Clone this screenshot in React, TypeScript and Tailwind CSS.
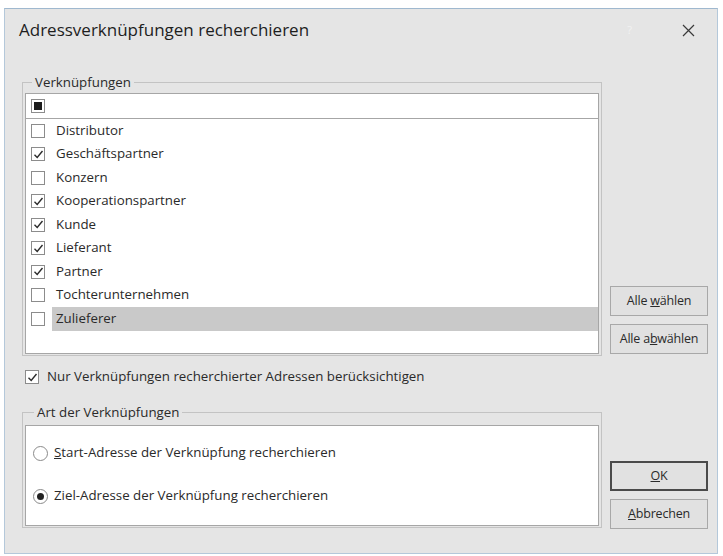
import React, { useState } from "react";

const items = [
  { id: 1, label: "Distributor", checked: false },
  { id: 2, label: "Geschäftspartner", checked: true },
  { id: 3, label: "Konzern", checked: false },
  { id: 4, label: "Kooperationspartner", checked: true },
  { id: 5, label: "Kunde", checked: true },
  { id: 6, label: "Lieferant", checked: true },
  { id: 7, label: "Partner", checked: true },
  { id: 8, label: "Tochterunternehmen", checked: false },
  { id: 9, label: "Zulieferer", checked: false },
];

const font = { fontFamily: '"Open Sans", "Noto Sans", Arial, sans-serif' };

const CheckBox = ({ checked }: { checked: boolean }) => (
  <span className="flex h-[14px] w-[14px] shrink-0 items-center justify-center border border-[#8c8c8c] bg-white">
    {checked && (
      <svg width="11" height="11" viewBox="0 0 11 11" fill="none">
        <path d="M1.5 5.8 L4.2 8.5 L9.5 2" stroke="#2b2b2b" strokeWidth="1.4" />
      </svg>
    )}
  </span>
);

const Radio = ({ checked }: { checked: boolean }) => (
  <span className="flex h-[15px] w-[15px] shrink-0 items-center justify-center rounded-full border border-[#8a8a8a] bg-white">
    {checked && <span className="h-[7px] w-[7px] rounded-full bg-[#222]" />}
  </span>
);

const DlgButton = ({ children, primary }: { children: React.ReactNode; primary?: boolean }) => (
  <button
    className={`h-[30px] w-[98px] bg-[#e1e1e1] text-[12.5px] tracking-[-0.2px] text-[#2a2a2a] ${
      primary ? "border-2 border-[#4a4a4a]" : "border border-[#a8a8a8]"
    }`}
  >
    {children}
  </button>
);

export default function App() {
  const [rows] = useState(items);
  const [target, setTarget] = useState(1);

  return (
    <div className="min-h-screen bg-white pl-[4px] pt-[8px]" style={font}>
      <div className="flex h-[546px] w-[714px] flex-col border border-[#b4c8da] border-t-[#9fb8cf] bg-[#e5e5e5] text-[#2a2a2a]">
        {/* Title bar */}
        <div className="flex h-[42px] items-center pl-[14px] pr-[22px]">
          <span className="text-[17px] text-[#1e1e1e]">Adressverknüpfungen recherchieren</span>
          <span className="ml-auto mr-[50px] text-[11px] text-[#f2f2f2]">?</span>
          <svg width="13" height="13" viewBox="0 0 13 13">
            <path d="M1 1 L12 12 M12 1 L1 12" stroke="#3a3a3a" strokeWidth="1.2" />
          </svg>
        </div>

        <div className="flex flex-col pl-[17px] pr-[9px] pt-[23px] text-[13.3px]">
          {/* Verknüpfungen */}
          <div className="flex items-end gap-[8px]">
            <fieldset className="w-[580px] border border-[#c3c3c3] px-[2px] pb-[1px]">
              <legend className="ml-[7px] px-[3px] leading-[16px]">Verknüpfungen</legend>
              <div className="mt-[3px] flex h-[261px] flex-col border border-[#a6a6a6] bg-white">
                <div className="flex h-[25px] shrink-0 items-center border-b border-[#a6a6a6] pl-[5px]">
                  <span className="flex h-[14px] w-[14px] items-center justify-center border border-[#8c8c8c]">
                    <span className="h-[8px] w-[8px] bg-[#1c1c1c]" />
                  </span>
                </div>
                {rows.map((r) => (
                  <div key={r.id} className="flex h-[23.5px] items-center pl-[5px]">
                    <CheckBox checked={r.checked} />
                    <span
                      className={`ml-[7px] flex h-full flex-1 items-center pl-[4px] ${
                        r.label === "Zulieferer" ? "bg-[#c9c9c9]" : ""
                      }`}
                    >
                      {r.label}
                    </span>
                  </div>
                ))}
              </div>
            </fieldset>
            <div className="mb-[2px] flex flex-col gap-[8px]">
              <DlgButton>
                Alle <u>w</u>ählen
              </DlgButton>
              <DlgButton>
                Alle a<u>b</u>wählen
              </DlgButton>
            </div>
          </div>

          {/* Nur recherchierte */}
          <label className="mt-[13px] flex h-[16px] items-center pl-[3px]">
            <CheckBox checked={true} />
            <span className="ml-[8px]">Nur Verknüpfungen recherchierter Adressen berücksichtigen</span>
          </label>

          {/* Art der Verknüpfungen */}
          <div className="mt-[19px] flex items-end gap-[8px]">
            <fieldset className="w-[580px] border border-[#c3c3c3] px-[2px] pb-[1px]">
              <legend className="ml-[9px] px-[3px] leading-[16px]">Art der Verknüpfungen</legend>
              <div className="mt-[5px] flex h-[101px] flex-col gap-[23px] border border-[#a6a6a6] bg-white pl-[7px] pt-[17px]">
                {["Start-Adresse der Verknüpfung recherchieren", "Ziel-Adresse der Verknüpfung recherchieren"].map(
                  (t, i) => (
                    <div key={t} className="flex h-[20px] items-center" onClick={() => setTarget(i)}>
                      <Radio checked={target === i} />
                      <span className="ml-[6px]">
                        {i === 0 ? (
                          <>
                            <u>S</u>
                            {t.slice(1)}
                          </>
                        ) : (
                          t
                        )}
                      </span>
                    </div>
                  )
                )}
              </div>
            </fieldset>
            <div className="mb-[-1px] flex flex-col gap-[8px]">
              <DlgButton primary>
                <u>O</u>K
              </DlgButton>
              <DlgButton>
                <u>A</u>bbrechen
              </DlgButton>
            </div>
          </div>
        </div>
      </div>
    </div>
  );
}
